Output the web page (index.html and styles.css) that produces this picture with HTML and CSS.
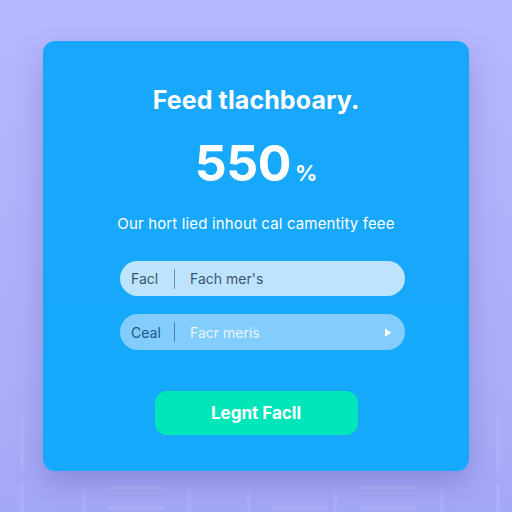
FILE: index.html
```html
<!DOCTYPE html>
<html lang="en">
<head>
    <meta charset="UTF-8">
    <title>Feed tlachboary</title>
    <link rel="stylesheet" href="styles.css">
</head>
<body>
    <!-- faint grid strokes behind the card -->
    <div class="deco">
        <span class="v" style="left:20px;top:418px;height:52px"></span>
        <span class="v" style="left:20px;top:484px;height:28px"></span>
        <span class="v" style="left:496px;top:418px;height:52px"></span>
        <span class="v" style="left:496px;top:484px;height:28px"></span>
        <span class="v" style="left:82px;top:490px;height:22px"></span>
        <span class="v" style="left:187px;top:490px;height:22px"></span>
        <span class="v" style="left:247px;top:490px;height:22px"></span>
        <span class="v" style="left:333px;top:490px;height:22px"></span>
        <span class="v" style="left:440px;top:490px;height:22px"></span>
        <span class="h" style="left:108px;top:486px;width:56px"></span>
        <span class="h" style="left:108px;top:506px;width:56px"></span>
        <span class="h" style="left:272px;top:506px;width:56px"></span>
        <span class="h" style="left:360px;top:486px;width:56px"></span>
        <span class="h" style="left:360px;top:506px;width:56px"></span>
    </div>

    <div class="card">
        <h1 class="title">Feed tlachboary.</h1>
        <div class="stat">550<span class="pct">%</span></div>
        <p class="sub">Our hort lied inhout cal camentity feee</p>

        <div class="field light">
            <span class="lbl">Facl</span>
            <span class="sep"></span>
            <span class="val">Fach mer's</span>
        </div>
        <div class="field dim">
            <span class="lbl">Ceal</span>
            <span class="sep"></span>
            <span class="val">Facr meris</span>
            <svg class="arrow" width="8" height="9" viewBox="0 0 8 9"><path d="M1 0.5 L7.5 4.5 L1 8.5 Z" fill="#ffffff"/></svg>
        </div>

        <button class="go">Legnt Facll</button>
    </div>
</body>
</html>
```

FILE: styles.css
```css
body {
    margin: 0;
    width: 512px;
    height: 512px;
    overflow: hidden;
    font-family: "Inter", "Noto Sans", sans-serif;
    background: linear-gradient(180deg, #b6b7fd 0%, #adaef8 70%, #a4a8f8 100%);
    position: relative;
}

.deco span {
    position: absolute;
    background: rgba(255, 255, 255, 0.09);
    border-radius: 2px;
}
.deco .v { width: 4px; }
.deco .h { height: 4px; }

.card {
    position: relative;
    margin: 41px 0 0 43px;
    width: 426px;
    height: 430px;
    border-radius: 12px;
    background: linear-gradient(180deg, #18a7fc 0%, #16a9fc 100%);
    box-shadow: 0 14px 28px rgba(90, 90, 170, 0.35);
    display: flex;
    flex-direction: column;
    align-items: center;
    color: #fff;
}

.title {
    margin: 45px 0 0;
    font-size: 25px;
    font-weight: 700;
    line-height: 28px;
    letter-spacing: 0.1px;
}

.stat {
    margin-top: 20px;
    font-size: 50px;
    font-weight: 700;
    line-height: 58px;
    letter-spacing: -0.5px;
}
.pct {
    font-size: 22px;
    margin-left: 4px;
    letter-spacing: 0;
}

.sub {
    margin: 12px 0 0;
    font-size: 15px;
    line-height: 20px;
    letter-spacing: 0.15px;
}

.field {
    align-self: flex-start;
    margin-left: 77px;
    width: 285px;
    height: 35px;
    border-radius: 18px;
    display: flex;
    align-items: center;
    font-size: 14px;
    box-sizing: border-box;
    padding-left: 11px;
}
.field.light {
    margin-top: 27px;
    background: #bee4fd;
    color: #3b5570;
}
.field.dim {
    margin-top: 18px;
    height: 36px;
    background: #82cdfc;
    color: #1d5486;
}
.lbl { width: 43px; }
.sep {
    width: 1px;
    height: 20px;
    background: currentColor;
    opacity: 0.6;
}
.val { margin-left: 15px; flex: 1; }
.dim .val { color: #e8f5ff; }
.arrow { margin-right: 13px; }

.go {
    margin-top: 41px;
    width: 203px;
    height: 44px;
    border: none;
    border-radius: 12px;
    background: #00e6b8;
    color: #fff;
    font-family: "Inter", "Noto Sans", sans-serif;
    font-size: 17px;
    font-weight: 700;
    cursor: pointer;
}
```
